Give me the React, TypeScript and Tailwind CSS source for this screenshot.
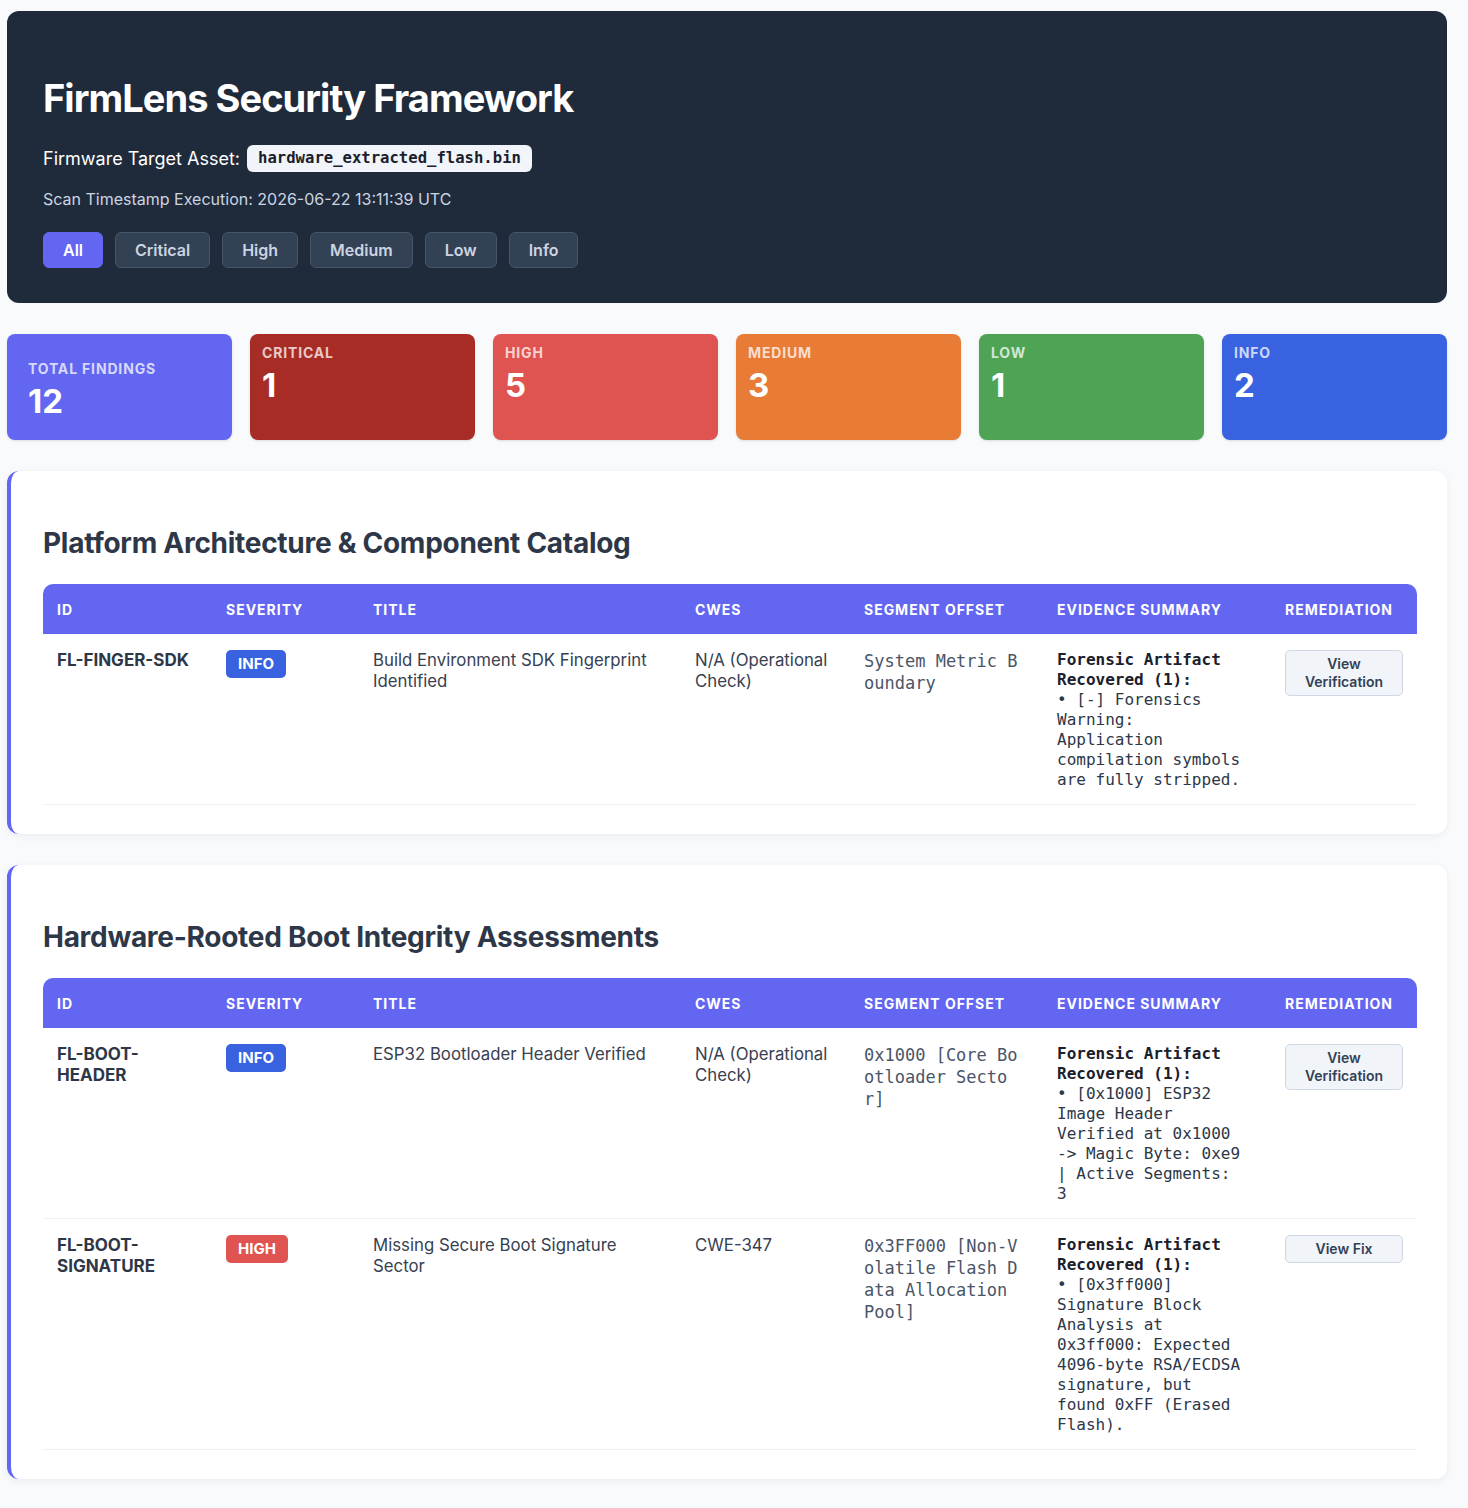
import React from "react";

type Sev = "INFO" | "HIGH";

type Finding = {
  id: string;
  severity: Sev;
  title: string;
  cwe: string;
  offset: string;
  evidence: string;
  action: string;
};

const sevClass: Record<Sev, string> = {
  INFO: "bg-[#3862e0]",
  HIGH: "bg-[#df5450]",
};

const filters = ["All", "Critical", "High", "Medium", "Low", "Info"];

const stats = [
  { label: "Critical", value: 1, bg: "bg-[#a82c26]" },
  { label: "High", value: 5, bg: "bg-[#df5450]" },
  { label: "Medium", value: 3, bg: "bg-[#e87b36]" },
  { label: "Low", value: 1, bg: "bg-[#4fa355]" },
  { label: "Info", value: 2, bg: "bg-[#3862e0]" },
];

const sections: { title: string; rows: Finding[] }[] = [
  {
    title: "Platform Architecture & Component Catalog",
    rows: [
      {
        id: "FL-FINGER-SDK",
        severity: "INFO",
        title: "Build Environment SDK Fingerprint Identified",
        cwe: "N/A (Operational Check)",
        offset: "System Metric Boundary",
        evidence:
          "• [-] Forensics Warning: Application compilation symbols are fully stripped.",
        action: "View Verification",
      },
    ],
  },
  {
    title: "Hardware-Rooted Boot Integrity Assessments",
    rows: [
      {
        id: "FL-BOOT-HEADER",
        severity: "INFO",
        title: "ESP32 Bootloader Header Verified",
        cwe: "N/A (Operational Check)",
        offset: "0x1000 [Core Bootloader Sector]",
        evidence:
          "• [0x1000] ESP32 Image Header Verified at 0x1000 -> Magic Byte: 0xe9 | Active Segments: 3",
        action: "View Verification",
      },
      {
        id: "FL-BOOT-SIGNATURE",
        severity: "HIGH",
        title: "Missing Secure Boot Signature Sector",
        cwe: "CWE-347",
        offset: "0x3FF000 [Non-Volatile Flash Data Allocation Pool]",
        evidence:
          "• [0x3ff000] Signature Block Analysis at 0x3ff000: Expected 4096-byte RSA/ECDSA signature, but found 0xFF (Erased Flash).",
        action: "View Fix",
      },
    ],
  },
];

const mono = "font-['DejaVu_Sans_Mono','Liberation_Mono',monospace]";

function FindingsTable({ rows }: { rows: Finding[] }) {
  const heads = [
    "ID",
    "Severity",
    "Title",
    "CWEs",
    "Segment Offset",
    "Evidence Summary",
    "Remediation",
  ];
  return (
    <table className="w-full table-fixed border-collapse">
      <colgroup>
        <col className="w-[169px]" />
        <col className="w-[147px]" />
        <col className="w-[322px]" />
        <col className="w-[169px]" />
        <col className="w-[193px]" />
        <col className="w-[228px]" />
        <col className="w-[146px]" />
      </colgroup>
      <thead>
        <tr className="bg-[#6366f1]">
          {heads.map((h, i) => (
            <th
              key={h}
              className={`h-[50px] px-[14px] text-left text-[14px] font-bold uppercase tracking-[0.07em] text-white ${
                i === 0 ? "rounded-tl-[10px]" : ""
              } ${i === heads.length - 1 ? "rounded-tr-[10px]" : ""}`}
            >
              {h}
            </th>
          ))}
        </tr>
      </thead>
      <tbody>
        {rows.map((r) => (
          <tr key={r.id} className="border-b border-[#edf1f6] align-top">
            <td className="px-[14px] pt-[16px] pb-[14px] text-[17px] leading-[21px] font-bold text-[#2d3748]">
              {r.id}
            </td>
            <td className="px-[14px] pt-[16px] pb-[14px]">
              <span
                className={`inline-block rounded-[5px] px-[12px] text-[15px] leading-[28px] font-bold text-white ${sevClass[r.severity]}`}
              >
                {r.severity}
              </span>
            </td>
            <td className="px-[14px] pt-[16px] pb-[14px] text-[16.8px] leading-[21px] text-[#374151]">
              {r.title}
            </td>
            <td className="px-[14px] pt-[16px] pb-[14px] text-[16.8px] leading-[21px] text-[#374151]">
              {r.cwe}
            </td>
            <td className="px-[14px] pt-[16px] pb-[14px]">
              <div
                className={`w-[160px] break-all text-[17px] leading-[22px] text-[#4a5568] ${mono}`}
              >
                {r.offset}
              </div>
            </td>
            <td className="px-[14px] pt-[16px] pb-[14px]">
              <div
                className={`w-[188px] text-[16px] leading-[20px] text-[#2d3748] ${mono}`}
              >
                <strong className="block font-bold text-[#1a202c]">
                  Forensic Artifact Recovered (1):
                </strong>
                {r.evidence}
              </div>
            </td>
            <td className="px-[14px] pt-[16px] pb-[14px]">
              <button className="w-full rounded-[5px] border border-[#cfd8e3] bg-[#f1f5f9] px-[12px] py-[4px] text-[14px] leading-[18px] font-semibold text-[#334155]">
                {r.action}
              </button>
            </td>
          </tr>
        ))}
      </tbody>
    </table>
  );
}

export default function App() {
  return (
    <div className="min-h-screen bg-[#f8fafc] font-['Inter','Noto_Sans',sans-serif]">
      <div className="flex w-[1440px] ml-[7px] flex-col gap-[31px] pt-[11px] pb-[30px]">
        <header className="rounded-[12px] bg-[#1f2a3b] px-[36px] pt-[63px] pb-[35px]">
          <h1 className="text-[38px] leading-[48px] font-bold tracking-[-0.025em] text-white">
            FirmLens Security Framework
          </h1>
          <div className="mt-[23px] flex items-center gap-[7px] text-[18px] text-white">
            <span>Firmware Target Asset:</span>
            <code
              className={`rounded-[6px] bg-[#f1f5f9] px-[11px] text-[15.6px] leading-[27px] font-bold text-[#1a202c] ${mono}`}
            >
              hardware_extracted_flash.bin
            </code>
          </div>
          <p className="mt-[15px] text-[16px] leading-[24px] text-[#cbd5e1]">
            Scan Timestamp Execution: 2026-06-22 13:11:39 UTC
          </p>
          <div className="mt-[21px] flex gap-[12px]">
            {filters.map((f, i) => (
              <button
                key={f}
                className={
                  i === 0
                    ? "h-[36px] rounded-[6px] border border-[#6366f1] bg-[#6366f1] px-[19px] text-[16px] font-semibold text-white"
                    : "h-[36px] rounded-[6px] border border-[#475569] bg-[#334155] px-[19px] text-[16px] font-semibold text-[#cbd5e1]"
                }
              >
                {f}
              </button>
            ))}
          </div>
        </header>

        <div className="grid grid-cols-6 gap-[18px]">
          <div className="flex h-[106px] flex-col justify-center rounded-[8px] bg-[#6366f1] px-[21px] pt-[4px] shadow-sm">
            <div className="text-[14px] font-bold uppercase tracking-[0.06em] text-white/75">
              Total Findings
            </div>
            <div className="mt-[2px] text-[33px] leading-[40px] font-bold text-white">12</div>
          </div>
          {stats.map((s) => (
            <div
              key={s.label}
              className={`h-[106px] rounded-[8px] px-[12px] pt-[9px] shadow-sm ${s.bg}`}
            >
              <div className="text-[14px] leading-[20px] font-bold uppercase tracking-[0.06em] text-white/75">
                {s.label}
              </div>
              <div className="mt-[2px] text-[33px] leading-[40px] font-bold text-white">
                {s.value}
              </div>
            </div>
          ))}
        </div>

        {sections.map((sec) => (
          <section
            key={sec.title}
            className="rounded-[12px] border-l-[4px] border-[#6366f1] bg-white pl-[32px] pr-[30px] pt-[55px] pb-[29px] shadow-[0_2px_8px_rgba(15,23,42,0.06)]"
          >
            <h2 className="text-[28px] leading-[34px] font-bold tracking-[-0.01em] text-[#2d3748]">
              {sec.title}
            </h2>
            <div className="mt-[24px]">
              <FindingsTable rows={sec.rows} />
            </div>
          </section>
        ))}
      </div>
    </div>
  );
}
